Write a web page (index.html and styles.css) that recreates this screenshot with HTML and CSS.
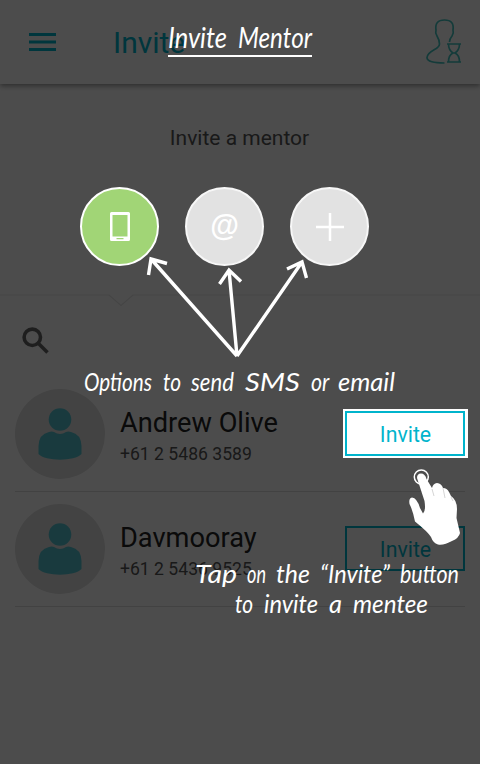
FILE: index.html
```html
<!DOCTYPE html>
<html lang="en">
<head>
<meta charset="utf-8">
<title>Invite Mentor</title>
<link rel="stylesheet" href="styles.css">
</head>
<body>
<svg width="0" height="0" class="defs" aria-hidden="true">
  <symbol id="person" viewBox="0 0 44 52">
    <circle cx="22" cy="11.5" r="11.3"/>
    <path d="M11 24Q14 23 16 24Q22 28 28 24Q30 23 33 24Q43 26 43.5 38V46C37 53.500 7 53.500 .5 46V38Q1 26 11 24Z"/>
  </symbol>
</svg>
<div class="app">
  <header class="bar">
    <svg class="menu" viewBox="0 0 27 18"><path d="M0 1.500H27M0 9H27M0 16.500H27"/></svg>
    <h1>Invite</h1>
    <svg class="pending" viewBox="0 0 36 46"><path d="M18.500 44C8 44 1 42.500 1 38.500C2 30.500 13.500 31 13.500 25Q13.500 21 11 17Q9 14 10 11Q8.500 1 18.500 1Q28.500 1 27 11Q28 14 26 17Q23.500 20 23.500 23M21 25H35M21 43H35M22.500 25Q22.500 31 27 34Q22.500 36 22.500 43M33.500 25Q33.500 31 29 34Q33.500 36 33.500 43M27 34H29"/></svg>
  </header>
  <section class="channels">
    <p>Invite a mentor</p>
  </section>
  <svg class="divider" viewBox="0 0 480 13"><path d="M0 1H109L121 11.500L133 1H480"/></svg>
  <div class="search"><svg viewBox="0 0 28 28"><circle cx="10.300" cy="10.300" r="8.200"/><path d="M16.500 16.500L25.500 25.500"/></svg></div>
  <ul class="people">
    <li>
      <div class="avatar"><svg><use href="#person"/></svg></div>
      <div class="info"><h2>Andrew Olive</h2><p>+61 2 5486 3589</p></div>
    </li>
    <li>
      <div class="avatar"><svg><use href="#person"/></svg></div>
      <div class="info"><h2>Davmooray</h2><p>+61 2 5436 9525</p></div>
      <button class="invite">Invite</button>
    </li>
  </ul>
</div>
<div class="coach">
  <div class="option sms"><svg viewBox="0 0 20 29"><path fill-rule="evenodd" d="M1.500 0H18.500Q20 0 20 1.500V27.500Q20 29 18.500 29H1.500Q0 29 0 27.500V1.500Q0 0 1.500 0ZM2.500 3V24.500H17.500V3ZM6.500 26V27.200H13.500V26Z"/></svg></div>
  <div class="option email"><span>@</span></div>
  <div class="option more"><svg viewBox="0 0 28 28"><path d="M14 0V28M0 14H28"/></svg></div>
  <div class="spotlight"><button class="invite">Invite</button></div>
  <svg class="notes" viewBox="0 0 480 764">
    <path class="arrow" d="M237 356L151 259M148.500 275L151 259L167 263.500M237 356L229 270M219.500 284L229 270L241 281.500M237 356L302 262M287 269L302 262L306.500 278"/>
    <path class="rule" d="M168 56H312"/>
    <text class="title" y="48"><tspan x="168" textLength="59" lengthAdjust="spacingAndGlyphs">Invite</tspan> <tspan x="238" textLength="74" lengthAdjust="spacingAndGlyphs">Mentor</tspan></text>
    <text y="391"><tspan x="84" textLength="68" lengthAdjust="spacingAndGlyphs">Options</tspan> <tspan x="163" textLength="18" lengthAdjust="spacingAndGlyphs">to</tspan> <tspan x="191" textLength="43" lengthAdjust="spacingAndGlyphs">send</tspan> <tspan x="245" textLength="55" lengthAdjust="spacingAndGlyphs">SMS</tspan> <tspan x="311" textLength="18" lengthAdjust="spacingAndGlyphs">or</tspan> <tspan x="338" textLength="57" lengthAdjust="spacingAndGlyphs">email</tspan></text>
    <text y="583"><tspan x="195" textLength="42" lengthAdjust="spacingAndGlyphs">Tap</tspan> <tspan x="247" textLength="19" lengthAdjust="spacingAndGlyphs">on</tspan> <tspan x="276" textLength="34" lengthAdjust="spacingAndGlyphs">the</tspan> <tspan x="320" textLength="70" lengthAdjust="spacingAndGlyphs">“Invite”</tspan> <tspan x="400" textLength="59" lengthAdjust="spacingAndGlyphs">button</tspan></text>
    <text y="613"><tspan x="235" textLength="18" lengthAdjust="spacingAndGlyphs">to</tspan> <tspan x="264" textLength="54" lengthAdjust="spacingAndGlyphs">invite</tspan> <tspan x="329" textLength="13" lengthAdjust="spacingAndGlyphs">a</tspan> <tspan x="353" textLength="75" lengthAdjust="spacingAndGlyphs">mentee</tspan></text>
    <circle class="ring" cx="421.300" cy="477" r="7"/>
    <path class="hand" d="M417 478Q417 473.500 421 473.500Q425 473.500 426.500 479L432 488Q433 483.500 437 483Q441.500 483.500 443 488Q447 488 449 492L451 496Q457 500 457 509L456.500 518L460 533Q459 538 452 541Q444 545.500 438 544.500Q433 543 431 537Q428 532 415 521.500Q413 511 409.500 504Q408.500 498 412 497.500Q417 498 420 508L423 513.500Q426 511 424.500 501Z"/>
    <path class="knuckle" d="M432 489L434 496M443 488L445 498M451 497L453 501"/>
  </svg>
</div>
</body>
</html>
```
FILE: styles.css
```css
* { box-sizing: border-box; }
body { margin: 0; background: #fff; font-family: Roboto, sans-serif; }
h1, h2, p, ul { margin: 0; padding: 0; font-weight: 400; }
svg { display: block; fill: none; }
.defs { position: absolute; }
.app { width: 480px; height: 764px; overflow: hidden; }
.bar { height: 84px; padding: 0 18px 0 29px; display: flex; align-items: center; box-shadow: 0 2px 5px rgba(0,0,0,.4); color: #00b4cc; }
.menu { width: 27px; height: 18px; stroke: currentColor; stroke-width: 3; }
.bar h1 { margin-left: 57px; font-size: 30px; line-height: 36px; padding-top: 2px; flex: 1; }
.pending { width: 36px; height: 46px; stroke: #43c5c1; stroke-width: 1.7; }
.channels { height: 210px; padding: 41px 1px 0 0; text-align: center; color: #555; font-size: 21px; line-height: 26px; }
.divider { width: 480px; height: 13px; stroke: #e7e7e7; stroke-width: 1.2; }
.search { padding: 20px 0 0 22px; height: 70px; }
.search svg { width: 28px; height: 28px; stroke: #666; stroke-width: 3.6; }
.people { list-style: none; padding: 0 15px; }
.people li { height: 115px; display: flex; align-items: center; border-bottom: 1px solid #ddd; }
.people .invite { margin-top: -2px; }
.avatar { width: 90px; height: 90px; border-radius: 50%; background: #e0e0e0; display: flex; justify-content: center; padding-top: 19px; }
.avatar svg { width: 44px; height: 52px; fill: #55c3d0; }
.info { margin-left: 15px; flex: 1; color: #222; padding-top: 4px; }
.info h2 { font-size: 27.2px; line-height: 32px; }
.info p { font-size: 17.6px; line-height: 22px; margin-top: 4px; color: #555; }
.invite { width: 120px; height: 45px; border: 2px solid #00b4cc; background: transparent; color: #00b4cc; font: 21.3px Roboto, sans-serif; padding: 2px 0 0 1px; }
.coach { position: absolute; top: 0; left: 0; width: 480px; height: 764px; background: rgba(0,0,0,.7); }
.option { position: absolute; top: 187px; width: 79px; height: 79px; border: 2px solid #f7f7f7; border-radius: 50%; background: #e2e2e2; display: flex; align-items: center; justify-content: center; color: #fff; }
.sms { left: 80px; background: #a1d576; border-color: #fff; }
.sms svg { width: 20px; height: 29px; fill: #fff; }
.email { left: 185px; }
.email span { font: bold 32px/34px "Liberation Sans", sans-serif; transform: scaleX(.92); padding-bottom: 3px; }
.more { left: 290px; }
.more svg { width: 28px; height: 28px; stroke: #fff; stroke-width: 2.5; }
.spotlight { position: absolute; left: 343px; top: 409px; width: 125px; height: 49px; padding: 2px; background: #fff; }
.notes { position: absolute; top: 0; left: 0; width: 480px; height: 764px; }
.notes text { font: italic 26px Lato, sans-serif; fill: #fff; }
.notes .title { font-size: 28px; }
.arrow { stroke: #fff; stroke-width: 3.4; }
.rule { stroke: #fff; stroke-width: 2; }
.ring { stroke: #fff; stroke-width: 1.5; }
.hand { fill: #fff; }
.knuckle { stroke: #d5d5d5; stroke-width: 1; }
```
